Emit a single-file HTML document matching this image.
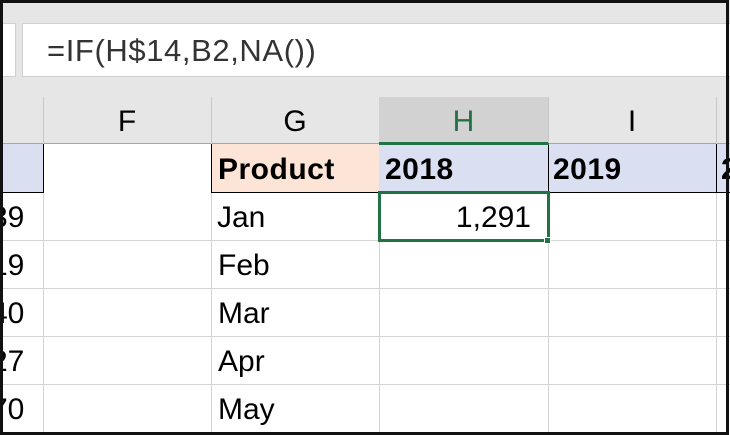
<!DOCTYPE html><html><head><style>
body{margin:0;width:730px;height:435px;overflow:hidden;background:#e8e8e8;font-family:"Liberation Sans",sans-serif;position:relative}
div{position:absolute;box-sizing:border-box}
.t{font-size:30px;color:#000;white-space:nowrap;line-height:48px}
.b{font-weight:bold;font-size:30px;letter-spacing:0.5px}
</style></head><body>
<div style="left:0;top:0;width:730px;height:435px;background:#e6e6e6"></div>
<div style="left:0;top:23px;width:16px;height:54px;background:#fff;border:1px solid #d0d0d0;border-left:none"></div>
<div style="left:22px;top:23px;width:710px;height:54px;background:#fff;border:1px solid #d0d0d0"></div>
<div class="t" style="left:47px;top:27px;color:#333;font-size:31px;letter-spacing:0.6px">=IF(H$14,B2,NA())</div>
<div style="left:0;top:97px;width:730px;height:47px;background:#e6e6e6;border-bottom:1px solid #a6a6a6"></div>
<div style="left:379px;top:97px;width:169px;height:47px;background:#d2d2d2;border-bottom:2px solid #217346"></div>
<div style="left:43px;top:97px;width:1px;height:47px;background:#c8c8c8"></div>
<div style="left:211px;top:97px;width:1px;height:47px;background:#c8c8c8"></div>
<div style="left:548px;top:97px;width:1px;height:47px;background:#c8c8c8"></div>
<div style="left:716px;top:97px;width:1px;height:47px;background:#c8c8c8"></div>
<div class="t" style="left:43px;width:168px;top:98px;text-align:center">F</div>
<div class="t" style="left:211px;width:168px;top:98px;text-align:center">G</div>
<div class="t" style="left:379px;width:169px;top:98px;text-align:center;color:#217346">H</div>
<div class="t" style="left:548px;width:168px;top:98px;text-align:center">I</div>
<div style="left:0;top:144px;width:730px;height:291px;background:#fff"></div>
<div style="left:0;top:144px;width:44px;height:49px;background:#dae0f1;border:1px solid #000;border-left:none;border-top:none"></div>
<div style="left:211px;top:144px;width:169px;height:49px;background:#fce4d6;border:1px solid #000;border-top:none"></div>
<div style="left:379px;top:144px;width:351px;height:49px;background:#dae0f1;border-bottom:1px solid #000"></div>
<div style="left:548px;top:144px;width:1px;height:48px;background:#000"></div>
<div style="left:716px;top:144px;width:1px;height:48px;background:#000"></div>
<div style="left:379px;top:143px;width:170px;height:2px;background:#217346"></div>
<div style="left:0;top:240px;width:730px;height:1px;background:#d4d4d4"></div>
<div style="left:0;top:288px;width:730px;height:1px;background:#d4d4d4"></div>
<div style="left:0;top:336px;width:730px;height:1px;background:#d4d4d4"></div>
<div style="left:0;top:384px;width:730px;height:1px;background:#d4d4d4"></div>
<div style="left:43px;top:193px;width:1px;height:242px;background:#d4d4d4"></div>
<div style="left:211px;top:193px;width:1px;height:242px;background:#d4d4d4"></div>
<div style="left:379px;top:193px;width:1px;height:242px;background:#d4d4d4"></div>
<div style="left:548px;top:193px;width:1px;height:242px;background:#d4d4d4"></div>
<div style="left:716px;top:193px;width:1px;height:242px;background:#d4d4d4"></div>
<div class="t b" style="left:218px;top:146px">Product</div>
<div class="t b" style="left:385px;top:146px">2018</div>
<div class="t b" style="left:553px;top:146px">2019</div>
<div class="t b" style="left:721px;top:146px">2</div>
<div class="t" style="left:217px;top:194px">Jan</div>
<div class="t" style="left:218px;top:242px">Feb</div>
<div class="t" style="left:218px;top:290px">Mar</div>
<div class="t" style="left:218px;top:338px">Apr</div>
<div class="t" style="left:218px;top:386px">May</div>
<div class="t" style="left:-9px;top:194px">39</div>
<div class="t" style="left:-9px;top:242px">19</div>
<div class="t" style="left:-9px;top:290px">40</div>
<div class="t" style="left:-9px;top:338px">27</div>
<div class="t" style="left:-9px;top:386px">70</div>
<div style="left:378px;top:191px;width:172px;height:51px;border:3px solid #217346"></div>
<div class="t" style="left:380px;width:151px;top:194px;text-align:right">1,291</div>
<div style="left:544px;top:237px;width:7px;height:7px;background:#217346;border:1px solid #fff"></div>
<div style="left:0;top:0;width:729px;height:435px;border:3px solid #111"></div>
</body></html>
